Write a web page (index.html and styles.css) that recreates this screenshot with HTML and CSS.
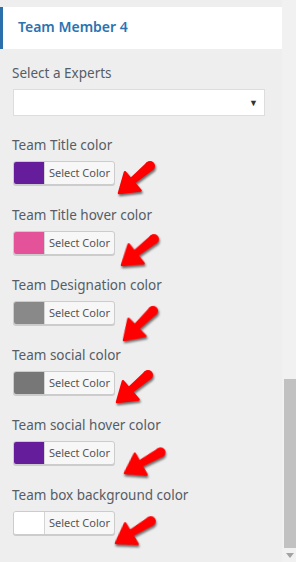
FILE: index.html
```html
<!DOCTYPE html>
<html lang="en">
<head>
    <meta charset="UTF-8">
    <meta name="viewport" content="width=device-width, initial-scale=1.0">
    <title>Team Member 4</title>
    <link rel="stylesheet" href="styles.css">
</head>
<body>
    <div class="frame">
        <div class="panel">
            <div class="section-head">Team Member 4</div>

            <div class="field field-select">
                <div class="label">Select a Experts</div>
                <div class="select"><span class="caret">&#9660;</span></div>
            </div>

            <div class="field">
                <div class="label">Team Title color</div>
                <div class="picker">
                    <span class="swatch swatch-purple"></span>
                    <span class="picker-text">Select Color</span>
                </div>
                <svg class="arrow arrow-1" viewBox="0 0 44 44"><use href="#red-arrow"/></svg>
            </div>

            <div class="field">
                <div class="label">Team Title hover color</div>
                <div class="picker">
                    <span class="swatch swatch-pink"></span>
                    <span class="picker-text">Select Color</span>
                </div>
                <svg class="arrow arrow-2" viewBox="0 0 44 44"><use href="#red-arrow"/></svg>
            </div>

            <div class="field">
                <div class="label">Team Designation color</div>
                <div class="picker">
                    <span class="swatch swatch-grey"></span>
                    <span class="picker-text">Select Color</span>
                </div>
                <svg class="arrow arrow-3" viewBox="0 0 44 44"><use href="#red-arrow"/></svg>
            </div>

            <div class="field">
                <div class="label">Team social color</div>
                <div class="picker">
                    <span class="swatch swatch-dark"></span>
                    <span class="picker-text">Select Color</span>
                </div>
                <svg class="arrow arrow-4" viewBox="0 0 44 44"><use href="#red-arrow"/></svg>
            </div>

            <div class="field">
                <div class="label">Team social hover color</div>
                <div class="picker">
                    <span class="swatch swatch-purple"></span>
                    <span class="picker-text">Select Color</span>
                </div>
                <svg class="arrow arrow-5" viewBox="0 0 44 44"><use href="#red-arrow"/></svg>
            </div>

            <div class="field">
                <div class="label">Team box background color</div>
                <div class="picker">
                    <span class="swatch swatch-white"></span>
                    <span class="picker-text">Select Color</span>
                </div>
                <svg class="arrow arrow-6" viewBox="0 0 44 44"><use href="#red-arrow"/></svg>
            </div>
        </div>

        <div class="scrollbar">
            <div class="thumb"></div>
            <div class="scroll-down"></div>
        </div>
    </div>

    <!-- shared arrow shape, tip at (4,40) -->
    <svg width="0" height="0" class="defs">
        <defs>
            <g id="red-arrow" fill="#f00">
                <polygon points="18.2,31.7 13.8,26.3 31.8,9.2 38.2,16.8"/>
                <circle cx="35" cy="13" r="5"/>
                <polygon points="4,40 10,19.2 25.5,37.6" stroke="#f00" stroke-width="2.5" stroke-linejoin="round"/>
            </g>
        </defs>
    </svg>
</body>
</html>
```

FILE: styles.css
```css
body {
    margin: 0;
    background: #eeeeee;
    font-family: "Noto Sans", "Liberation Sans", sans-serif;
    color: #555d66;
}

.frame {
    display: flex;
    width: 296px;
    height: 562px;
    overflow: hidden;
}

.panel {
    flex: 1;
    padding-top: 7px;
}

.section-head {
    height: 42px;
    background: #fff;
    border-left: 3px solid #2b6fab;
    padding-left: 15px;
    font-size: 14px;
    font-weight: 600;
    color: #2b72b0;
    line-height: 40px;
}

.field {
    position: relative;
    padding: 0 13px;
    height: 70px;
}

.field-select {
    padding-top: 15px;
    height: 72px;
}

.label {
    font-size: 13.5px;
    line-height: 18px;
    margin-left: -1px;
}

.select {
    margin-top: 7px;
    width: 250px;
    height: 25px;
    background: #fff;
    border: 1px solid #dddddd;
    display: flex;
    align-items: center;
    justify-content: flex-end;
}

.caret {
    font-size: 9px;
    color: #333;
    padding-right: 6px;
    line-height: 1;
}

.picker {
    margin-top: 7px;
    width: 100px;
    height: 22px;
    border: 1px solid #cccccc;
    border-radius: 3px;
    background: #f7f7f7;
    display: flex;
    overflow: hidden;
    box-shadow: 0 1px 0 #ccc;
}

.swatch {
    width: 30px;
    border-right: 1px solid #d4d4d4;
}

.swatch-purple { background: #661d9c; }
.swatch-pink { background: #e4529a; }
.swatch-grey { background: #898989; }
.swatch-dark { background: #777777; }
.swatch-white { background: #ffffff; }

.picker-text {
    flex: 1;
    text-align: center;
    font-size: 11px;
    line-height: 22px;
    color: #555;
}

.arrow {
    position: absolute;
    width: 44px;
    height: 44px;
    transform-origin: 4px 40px;
    filter: drop-shadow(1px 2px 1px rgba(0, 0, 0, 0.55));
}

.arrow-1 { left: 115px; top: 17px; }
.arrow-2 { left: 118px; top: 19px; transform: rotate(2deg); }
.arrow-3 { left: 120px; top: 24px; transform: rotate(-4deg); }
.arrow-4 { left: 113px; top: 16px; }
.arrow-5 { left: 121px; top: 17px; transform: rotate(11deg); }
.arrow-6 { left: 112px; top: 17px; transform: rotate(9deg); }

.defs {
    position: absolute;
}

.scrollbar {
    width: 14px;
    background: #f1f1f1;
    display: flex;
    flex-direction: column;
    align-items: flex-end;
}

.thumb {
    margin-top: 379px;
    width: 12px;
    height: 169px;
    background: #c1c1c1;
}

.scroll-down {
    margin-top: 5px;
    margin-right: 2px;
    width: 0;
    height: 0;
    border-left: 4px solid transparent;
    border-right: 4px solid transparent;
    border-top: 5px solid #a3a3a3;
}
```
